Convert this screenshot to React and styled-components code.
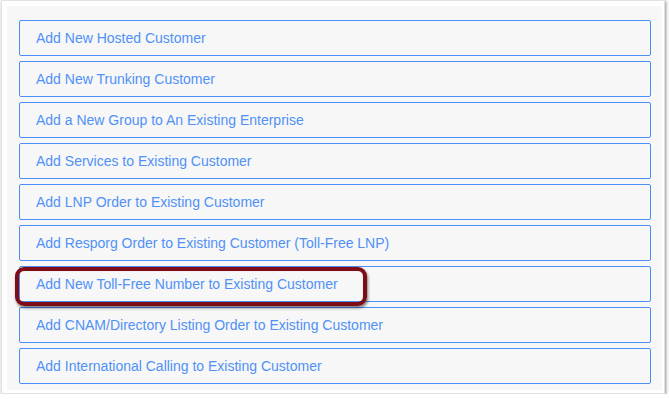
import React from "react";
import styled, { createGlobalStyle } from "styled-components";

const Global = createGlobalStyle`
  html, body { margin: 0; padding: 0; background: #ffffff; }
  body { font-family: "Liberation Sans", Arial, sans-serif; }
`;

const Frame = styled.div`
  position: relative;
  box-sizing: border-box;
  width: 664px;
  height: 394px;
  margin-left: 1px;
  background: #ffffff;
  border: 1px solid #e2e2e2;
  box-shadow: 1px 1px 3px rgba(0, 0, 0, 0.45);
  padding: 5px 2px 3px 5px;
`;

const Panel = styled.div`
  position: relative;
  box-sizing: border-box;
  height: 100%;
  background: #f7f7f7;
  padding: 14px 11px 6px 12px;
  display: flex;
  flex-direction: column;
  gap: 5px;
`;

const Item = styled.a`
  box-sizing: border-box;
  display: flex;
  align-items: center;
  height: 36px;
  padding: 0 16px;
  border: 1px solid #4a8ef8;
  border-radius: 2px;
  color: #4f91f6;
  font-size: 14px;
  text-decoration: none;
  cursor: pointer;
`;

const Highlight = styled.div`
  position: absolute;
  left: 8px;
  top: 261px;
  width: 352px;
  height: 39px;
  box-sizing: border-box;
  border: 4px solid #7e0c16;
  border-radius: 9px;
  box-shadow: 1px 2px 3px rgba(0, 0, 0, 0.5), inset 0 0 1px rgba(0,0,0,0.3);
  pointer-events: none;
`;

const items = [
  "Add New Hosted Customer",
  "Add New Trunking Customer",
  "Add a New Group to An Existing Enterprise",
  "Add Services to Existing Customer",
  "Add LNP Order to Existing Customer",
  "Add Resporg Order to Existing Customer (Toll-Free LNP)",
  "Add New Toll-Free Number to Existing Customer",
  "Add CNAM/Directory Listing Order to Existing Customer",
  "Add International Calling to Existing Customer",
];

export default function App() {
  return (
    <>
      <Global />
      <Frame>
        <Panel>
          {items.map((t) => (
            <Item key={t}>{t}</Item>
          ))}
          <Highlight />
        </Panel>
      </Frame>
    </>
  );
}
